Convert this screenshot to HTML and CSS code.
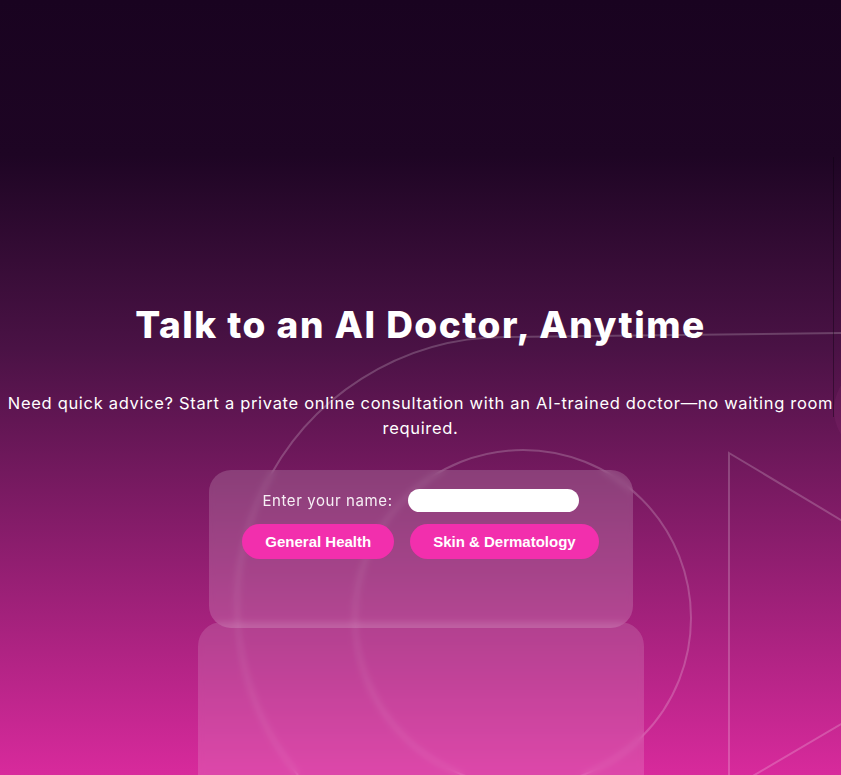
FILE: index.html
```html
<!DOCTYPE html>
<html lang="en">
<head>
<meta charset="utf-8">
<title>Talk to an AI Doctor</title>
<link rel="stylesheet" href="styles.css">
</head>
<body>
<div class="page">
  <svg class="decor" width="841" height="775" viewBox="0 0 841 775" aria-hidden="true">
    <path class="line" d="M 298 775 A 268 268 0 0 1 505 337 L 841 333" />
    <circle class="line" cx="523" cy="618" r="168" />
    <polygon class="line" points="729,453 1013,623 729,790" />
    <line class="dark" x1="833.5" y1="157" x2="833.5" y2="417" />
    <circle class="blob" cx="880" cy="410" r="46" />
  </svg>

  <main class="hero">
    <h1 class="title">Talk to an AI Doctor, Anytime</h1>
    <p class="subtitle">Need quick advice? Start a private online consultation with an AI-trained doctor—no waiting room required.</p>

    <section class="card">
      <div class="name-row">
        <label class="name-label" for="name">Enter your name:</label>
        <input class="name-input" id="name" type="text">
      </div>
      <div class="topics">
        <button class="topic">General Health</button>
        <button class="topic">Skin &amp; Dermatology</button>
      </div>
    </section>
    <section class="panel"></section>
  </main>
</div>
</body>
</html>
```

FILE: styles.css
```css
* { box-sizing: border-box; }

html, body {
  margin: 0;
  padding: 0;
  height: 100%;
}

body {
  overflow: hidden;
  font-family: "Inter", "Open Sans", sans-serif;
  color: #fff;
  background: linear-gradient(to bottom,
    #190320 0%,
    #1e0524 20%,
    #4a1245 45%,
    #d82a9c 100%);
}

.page {
  position: relative;
  width: 100%;
  height: 775px;
  overflow: hidden;
}

.decor {
  position: absolute;
  left: 0;
  top: 0;
}

.decor .line {
  fill: none;
  stroke: rgba(255, 255, 255, 0.2);
  stroke-width: 2;
}

.decor .dark {
  stroke: rgba(10, 0, 15, 0.4);
  stroke-width: 1;
}

.decor .blob {
  fill: rgba(255, 120, 200, 0.06);
}

.hero {
  position: relative;
  display: flex;
  flex-direction: column;
  align-items: center;
  padding-top: 302px;
}

.title {
  margin: 0;
  font-family: "Inter", sans-serif;
  font-weight: 800;
  font-size: 37px;
  line-height: 46px;
  letter-spacing: 1.5px;
  text-align: center;
}

.subtitle {
  margin: 43px 0 0;
  font-family: "Inter", sans-serif;
  font-size: 16.5px;
  line-height: 25px;
  letter-spacing: 0.68px;
  text-align: center;
  width: 100%;
}

.card {
  margin-top: 29px;
  width: 424px;
  height: 158px;
  border-radius: 22px;
  background: rgba(255, 255, 255, 0.17);
  backdrop-filter: blur(3px);
  padding-top: 19px;
  display: flex;
  flex-direction: column;
  align-items: center;
  gap: 12px;
  position: relative;
  z-index: 1;
}

.name-row {
  display: flex;
  align-items: center;
  gap: 15px;
}

.name-label {
  font-family: "Inter", sans-serif;
  font-size: 15px;
  letter-spacing: 0.6px;
  color: rgba(255, 255, 255, 0.92);
}

.name-input {
  width: 171px;
  height: 23px;
  border: none;
  border-radius: 12px;
  background: #fff;
  outline: none;
}

.topics {
  display: flex;
  gap: 16px;
}

.topic {
  height: 35px;
  padding: 0 23px;
  border: none;
  border-radius: 18px;
  background: #f22fad;
  color: #fff;
  font-family: "Liberation Sans", Arial, sans-serif;
  font-weight: 700;
  font-size: 15px;
}

.panel {
  margin-top: -6px;
  width: 446px;
  height: 220px;
  border-radius: 24px;
  background: rgba(255, 255, 255, 0.14);
  backdrop-filter: blur(3px);
}
```
